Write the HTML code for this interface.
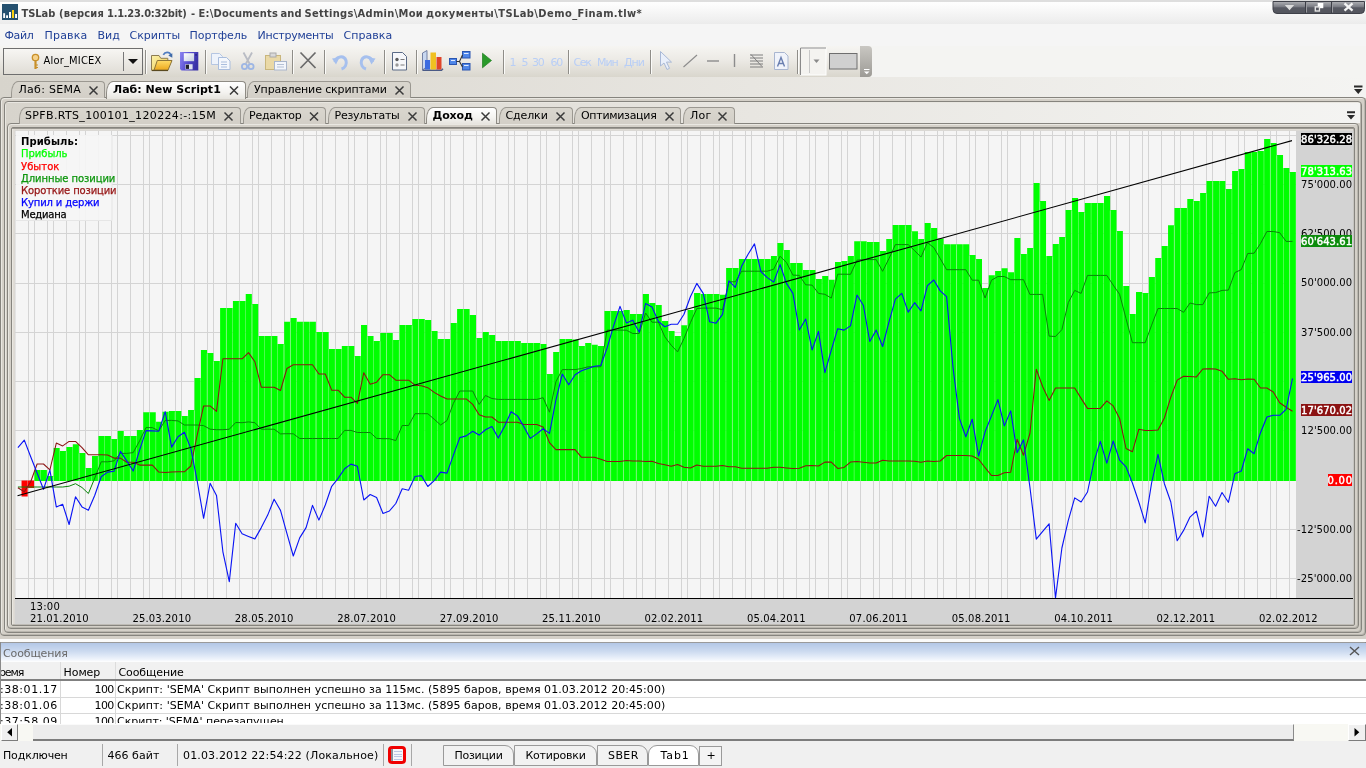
<!DOCTYPE html>
<html lang="ru"><head><meta charset="utf-8"><title>TSLab</title>
<style>
html,body{margin:0;padding:0;}
body{width:1366px;height:768px;overflow:hidden;position:relative;background:#d4d0c8;font-family:"DejaVu Sans","Liberation Sans",sans-serif;font-size:11px;}
.t{position:absolute;white-space:pre;}
.b{position:absolute;box-sizing:border-box;}
svg{position:absolute;left:0;top:0;}
svg text{font-family:"DejaVu Sans","Liberation Sans",sans-serif;}
</style></head><body>
<div id="app" style="position:absolute;left:0;top:0;width:1366px;height:768px;will-change:transform;">
<div class="b" style="left:0px;top:0px;width:1366px;height:24px;background:linear-gradient(#ffffff 0px,#fdfdfd 4px,#efefef 20px,#ebebeb 24px);"></div>
<div class="b" style="left:0px;top:0px;width:1366px;height:1.5px;background:#dedede;"></div>
<svg width="1366" height="768" viewBox="0 0 1366 768" style="z-index:5"><rect x="2" y="4" width="16" height="16" fill="#24506f"/><rect x="3.200" y="13.200" width="1.900" height="4.800" fill="#fff"/><rect x="6.100" y="15.300" width="1.900" height="2.700" fill="#fff"/><rect x="9" y="12" width="2" height="6" fill="#fff"/><rect x="12" y="10" width="2" height="8" fill="#f7cf10"/><rect x="15.100" y="14" width="1.900" height="4" fill="#fff"/><defs><linearGradient id="gwb" x1="0" y1="0" x2="0" y2="1"><stop offset="0" stop-color="#b0b1b5"/><stop offset="0.450" stop-color="#787a82"/><stop offset="0.520" stop-color="#575962"/><stop offset="1" stop-color="#53555d"/></linearGradient></defs><path d="M1273 1.500V9.500a4 4 0 0 0 4 4H1360.500a4 4 0 0 0 4-4V1.500Z" fill="url(#gwb)" stroke="#3e4048" stroke-width="1"/><path d="M1305.500 2V13M1331.500 2V13" stroke="#3c3e46" stroke-width="1"/><path d="M1306.500 2V12.500M1332.500 2V12.500" stroke="#9a9ba0" stroke-width="1"/><path d="M1284.800 5h9.400l-4.700 5.200z" fill="#dcdcdc"/><path d="M1317.700 3h5.600v5.200h-5.600z" fill="#fff"/><path d="M1314.600 6.200h5.500v5.500h-5.500z" fill="#e4e4e4"/><path d="M1316 7.600h2.800v2.700h-2.800z" fill="#575962"/><path d="M1344.500 3.300l8 7.400M1352.500 3.300l-8 7.400" stroke="#f4f4f4" stroke-width="2.300"/></svg>
<div class="t" style="left:21.50px;top:7px;font-size:11px;line-height:14px;color:#444444;font-family:'DejaVu Sans Condensed','DejaVu Sans',sans-serif;font-weight:bold;letter-spacing:-0.037px;">TSLab</div>
<div class="t" style="left:59.00px;top:7px;font-size:11px;line-height:14px;color:#444444;font-family:'DejaVu Sans Condensed','DejaVu Sans',sans-serif;font-weight:bold;letter-spacing:0.177px;">(версия</div>
<div class="t" style="left:107.00px;top:7px;font-size:11px;line-height:14px;color:#444444;font-family:'DejaVu Sans Condensed','DejaVu Sans',sans-serif;font-weight:bold;letter-spacing:-0.241px;">1.1.23.0:32bit)</div>
<div class="t" style="left:191.00px;top:7px;font-size:11px;line-height:14px;color:#444444;font-family:'DejaVu Sans Condensed','DejaVu Sans',sans-serif;font-weight:bold;">-</div>
<div class="t" style="left:198.50px;top:7px;font-size:11px;line-height:14px;color:#444444;font-family:'DejaVu Sans Condensed','DejaVu Sans',sans-serif;font-weight:bold;letter-spacing:0.212px;">E:\Documents</div>
<div class="t" style="left:280.50px;top:7px;font-size:11px;line-height:14px;color:#444444;font-family:'DejaVu Sans Condensed','DejaVu Sans',sans-serif;font-weight:bold;letter-spacing:0.096px;">and</div>
<div class="t" style="left:304.50px;top:7px;font-size:11px;line-height:14px;color:#444444;font-family:'DejaVu Sans Condensed','DejaVu Sans',sans-serif;font-weight:bold;letter-spacing:0.310px;">Settings\Admin\Мои</div>
<div class="t" style="left:426.00px;top:7px;font-size:11px;line-height:14px;color:#444444;font-family:'DejaVu Sans Condensed','DejaVu Sans',sans-serif;font-weight:bold;letter-spacing:0.432px;">документы\TSLab\Demo_Finam.tlw*</div>
<div class="b" style="left:0px;top:24px;width:1366px;height:22px;background:#f5f5f5;"></div>
<div class="t" style="left:4.50px;top:29px;font-size:11px;line-height:14px;color:#1f3f96;letter-spacing:-0.363px;">Файл</div>
<div class="t" style="left:44.50px;top:29px;font-size:11px;line-height:14px;color:#1f3f96;letter-spacing:0.187px;">Правка</div>
<div class="t" style="left:97.50px;top:29px;font-size:11px;line-height:14px;color:#1f3f96;letter-spacing:-0.000px;">Вид</div>
<div class="t" style="left:129.50px;top:29px;font-size:11px;line-height:14px;color:#1f3f96;letter-spacing:0.010px;">Скрипты</div>
<div class="t" style="left:189.50px;top:29px;font-size:11px;line-height:14px;color:#1f3f96;letter-spacing:-0.040px;">Портфель</div>
<div class="t" style="left:257.50px;top:29px;font-size:11px;line-height:14px;color:#1f3f96;letter-spacing:-0.242px;">Инструменты</div>
<div class="t" style="left:343.50px;top:29px;font-size:11px;line-height:14px;color:#1f3f96;letter-spacing:0.056px;">Справка</div>
<div class="b" style="left:0px;top:46px;width:1366px;height:32px;background:#f4f4f2;"></div>
<div class="b" style="left:0px;top:46px;width:872px;height:30.5px;background:linear-gradient(#f6f5f2 0%,#eceae5 45%,#d9d6cd 100%);border-radius:0 4px 4px 0;"></div>
<div class="b" style="left:860px;top:46px;width:12px;height:30.5px;background:linear-gradient(#c9c7c2,#9d9b96);border-radius:0 4px 4px 0;"></div>
<div class="b" style="left:3px;top:47.5px;width:140px;height:27.5px;border:1px solid #6e6e6e;background:linear-gradient(#f7f6f3,#e0ddd6);"></div>
<div class="b" style="left:123px;top:52px;width:1px;height:19px;background:#777;"></div>
<div class="t" style="left:43.50px;top:54px;font-size:11px;line-height:14px;color:#000;font-family:'DejaVu Sans Condensed','DejaVu Sans',sans-serif;letter-spacing:0.202px;">Alor_MICEX</div>
<div class="b" style="left:0px;top:77px;width:1366px;height:21px;background:linear-gradient(90deg,#d7d4cc 0%,#dedbd4 25%,#e8e6e1 55%,#f4f4f2 100%);"></div>
<svg width="1366" height="768" viewBox="0 0 1366 768"><path d="M128 59h10l-5 5z" fill="#111"/><circle cx="35.5" cy="57.5" r="3.2" fill="#f6d28a" stroke="#c8902a" stroke-width="1.3"/><path d="M35.5 60.5V69" stroke="#c8902a" stroke-width="2.2"/><path d="M36 65h2M36 67.5h2" stroke="#c8902a" stroke-width="1"/><defs><linearGradient id="gfb" x1="0" y1="0" x2="1" y2="1"><stop offset="0" stop-color="#fbf0a8"/><stop offset="1" stop-color="#efcf58"/></linearGradient><linearGradient id="gff" x1="0" y1="0" x2="0" y2="1"><stop offset="0" stop-color="#ffdc68"/><stop offset="1" stop-color="#eda81c"/></linearGradient><linearGradient id="gsv" x1="0" y1="0" x2="1" y2="0.300"><stop offset="0" stop-color="#8d86f2"/><stop offset="0.500" stop-color="#5a50d2"/><stop offset="1" stop-color="#3a32a6"/></linearGradient><linearGradient id="gsl" x1="0" y1="0" x2="1" y2="1"><stop offset="0" stop-color="#ffffff"/><stop offset="1" stop-color="#c4cde0"/></linearGradient></defs><path d="M151.500 55.500h7.500l1.800 2.800h7v12h-16.300z" fill="url(#gfb)" stroke="#8c7c52" stroke-width="1"/><path d="M154 70.200l3.300-9.700h14.700l-4 9.700z" fill="url(#gff)" stroke="#8c7438" stroke-width="1"/><path d="M152 70.500h16" stroke="#5a4a20" stroke-width="1.200"/><path d="M163.300 54.800c1.800-3.400 6.200-3.300 7.800 0.300" fill="none" stroke="#4f7cc0" stroke-width="1.700"/><path d="M168.300 55.600l4-2.400v4.600z" fill="#3f6aa8"/><path d="M180 52h18.300v18.600h-16.800l-1.500-1.500z" fill="url(#gsv)"/><rect x="183.800" y="53.200" width="10.300" height="8" fill="url(#gsl)"/><rect x="195.300" y="54" width="1.500" height="1.800" fill="#2a2480"/><rect x="185.300" y="64.200" width="7.300" height="5.200" fill="#dfe3ee"/><rect x="185.800" y="64.700" width="3.200" height="4.200" fill="#20202c"/><path d="M211.500 53.500h8l3 3v8h-11z" fill="#eef3fb" stroke="#b5c6e2"/><path d="M218.500 57.500h8l3.500 3.500v8.500h-11.500z" fill="#f4f7fc" stroke="#a9bddd"/><path d="M221 62h6M221 64.500h6M221 67h6" stroke="#a9bddd" stroke-width="1"/><path d="M243.500 52.500l6 11M252 52.500l-6 11" stroke="#b9bcc4" stroke-width="1.800" fill="none"/><circle cx="244.500" cy="66.500" r="2.600" fill="none" stroke="#9db6e4" stroke-width="1.800"/><circle cx="251" cy="66.500" r="2.600" fill="none" stroke="#9db6e4" stroke-width="1.800"/><rect x="265.500" y="55.500" width="15" height="14" fill="#ead9a6" stroke="#c9b67c"/><rect x="270" y="53" width="6" height="4" fill="#d9d9d9" stroke="#aaa"/><rect x="274.500" y="61.500" width="12" height="8.500" fill="#f3f6fb" stroke="#a9b6cc"/><path d="M277 64.500h7M277 67h7" stroke="#b4c0d4" stroke-width="1"/><path d="M300.500 52.500l15 15.500M315.500 52.500l-15 15.500" stroke="#6a6a6a" stroke-width="1.700" fill="none"/><path d="M335 62c1-6 9-7 11-1.500c1.200 4-1 7.500-4.500 8.500" fill="none" stroke="#a6c0ee" stroke-width="3"/><path d="M332 58.500l7.500-1l-3.500 7z" fill="#a6c0ee"/><path d="M372.500 62c-1-6-9-7-11-1.500c-1.200 4 1 7.500 4.500 8.500" fill="none" stroke="#a6c0ee" stroke-width="3"/><path d="M375.500 58.500l-7.500-1l3.500 7z" fill="#a6c0ee"/><path d="M392.500 52.500h10l4 4v13.500h-14z" fill="#f6f7fa" stroke="#5a6a86"/><circle cx="397" cy="59.500" r="1.700" fill="#5a5a5a"/><circle cx="397" cy="65" r="1.700" fill="#9a9a9a"/><path d="M400.500 59.500h4M400.500 65h4" stroke="#7a7a7a" stroke-width="1.200"/><path d="M422.500 53l4.500-2.500v16l-4.500 3.500z" fill="#c9d8f0" stroke="#5a6a92" stroke-width="0.800"/><path d="M422.500 70.200h19l1.500-1.500" fill="none" stroke="#4a5a86" stroke-width="1.400"/><rect x="425" y="60" width="5" height="9.500" fill="#3b6be0"/><rect x="430.500" y="52.500" width="5.500" height="17" fill="#f0c020"/><rect x="436.500" y="57" width="5" height="12.500" fill="#e04428"/><rect x="449.500" y="58.500" width="7" height="6" fill="#4f86e8" stroke="#2a55b0"/><rect x="462.500" y="51.500" width="7.500" height="6.500" fill="#4f86e8" stroke="#2a55b0"/><rect x="462.500" y="63.500" width="7.500" height="6.500" fill="#4f86e8" stroke="#2a55b0"/><path d="M456.500 61.500h3l3-6.500M459.500 61.500l3 5.500" stroke="#333" stroke-width="1.100" fill="none"/><path d="M451 60.500h4M464 53.500h4.500M464 65.500h4.500" stroke="#dfeaff" stroke-width="1.200"/><path d="M482.500 53.200l9 7.300l-9 7.300z" fill="#2a9a2a" stroke="#1c7c1c" stroke-width="0.700"/><path d="M660.500 51.500v14.500l3.500-3l3 6.500l2.500-1.200l-3-6.200h5z" fill="#e9effa" stroke="#a9b9d6" stroke-width="1"/><path d="M683.500 67l13.500-12" stroke="#8c8c8c" stroke-width="1.200"/><path d="M707 61h12" stroke="#8c8c8c" stroke-width="1.400"/><path d="M734.500 54v13" stroke="#8c8c8c" stroke-width="1.400"/><path d="M750 55h13M750 58h13M750 61h13M750 64h13M750 67h13" stroke="#7e7e7e" stroke-width="1.100"/><path d="M751 54.500l11 12" stroke="#7e7e7e" stroke-width="1"/><path d="M774.500 52.500h10l3.500 3.500v13.500h-13.500z" fill="#f0f3fa" stroke="#a9b6d0"/><path d="M777.500 66.500l3.500-9l3.500 9M778.800 63.500h4.500" stroke="#6a7fb0" stroke-width="1.400" fill="none"/><rect x="800.500" y="48" width="25.500" height="27" fill="#f4f3f0" stroke="#fff" stroke-width="1"/><path d="M800.500 75V48h25.500" fill="none" stroke="#8a8a8a" stroke-width="1"/><rect x="809" y="50" width="1" height="23" fill="#c8c8c8"/><path d="M813.500 59.500h6l-3 3.500z" fill="#8a8a8a"/><rect x="829.500" y="53.500" width="27.500" height="15.500" fill="#d0d0d0" stroke="#6e6e6e"/><path d="M864 71.500h5.500l-2.750 2.800z" fill="#fff"/><path d="M864 69.500h5.500" stroke="#fff" stroke-width="1"/></svg>
<div class="t" style="left:509.50px;top:56px;font-size:11px;line-height:14px;color:#b8cef6;">1</div>
<div class="t" style="left:521.50px;top:56px;font-size:11px;line-height:14px;color:#b8cef6;">5</div>
<div class="t" style="left:532.00px;top:56px;font-size:11px;line-height:14px;color:#b8cef6;letter-spacing:-1.198px;">30</div>
<div class="t" style="left:550.50px;top:56px;font-size:11px;line-height:14px;color:#b8cef6;letter-spacing:-1.198px;">60</div>
<div class="t" style="left:573.50px;top:56px;font-size:11px;line-height:14px;color:#b8cef6;letter-spacing:-1.396px;">Сек</div>
<div class="t" style="left:597.00px;top:56px;font-size:11px;line-height:14px;color:#b8cef6;letter-spacing:-1.016px;">Мин</div>
<div class="t" style="left:624.00px;top:56px;font-size:11px;line-height:14px;color:#b8cef6;letter-spacing:-1.067px;">Дни</div>
<div class="b" style="left:145px;top:50px;width:1px;height:24px;background:#8f8d88;"></div>
<div class="b" style="left:146px;top:50px;width:1px;height:24px;background:#fbfbf9;"></div>
<div class="b" style="left:205px;top:50px;width:1px;height:24px;background:#8f8d88;"></div>
<div class="b" style="left:206px;top:50px;width:1px;height:24px;background:#fbfbf9;"></div>
<div class="b" style="left:292px;top:50px;width:1px;height:24px;background:#8f8d88;"></div>
<div class="b" style="left:293px;top:50px;width:1px;height:24px;background:#fbfbf9;"></div>
<div class="b" style="left:324px;top:50px;width:1px;height:24px;background:#8f8d88;"></div>
<div class="b" style="left:325px;top:50px;width:1px;height:24px;background:#fbfbf9;"></div>
<div class="b" style="left:384px;top:50px;width:1px;height:24px;background:#8f8d88;"></div>
<div class="b" style="left:385px;top:50px;width:1px;height:24px;background:#fbfbf9;"></div>
<div class="b" style="left:416px;top:50px;width:1px;height:24px;background:#8f8d88;"></div>
<div class="b" style="left:417px;top:50px;width:1px;height:24px;background:#fbfbf9;"></div>
<div class="b" style="left:503px;top:50px;width:1px;height:24px;background:#8f8d88;"></div>
<div class="b" style="left:504px;top:50px;width:1px;height:24px;background:#fbfbf9;"></div>
<div class="b" style="left:568px;top:50px;width:1px;height:24px;background:#8f8d88;"></div>
<div class="b" style="left:569px;top:50px;width:1px;height:24px;background:#fbfbf9;"></div>
<div class="b" style="left:650px;top:50px;width:1px;height:24px;background:#8f8d88;"></div>
<div class="b" style="left:651px;top:50px;width:1px;height:24px;background:#fbfbf9;"></div>
<div class="b" style="left:797px;top:50px;width:1px;height:24px;background:#8f8d88;"></div>
<div class="b" style="left:798px;top:50px;width:1px;height:24px;background:#fbfbf9;"></div>
<div class="b" style="left:0px;top:97px;width:1366px;height:539px;border:1px solid #86847e;border-radius:4px;background:#d4d0c8;box-shadow:inset 1px 1px 0 #e9e7e1, inset -1px -1px 0 #b9b6ae;"></div>
<div class="b" style="left:4px;top:101px;width:1358px;height:531.5px;border:1px solid #86847e;border-radius:4px;background:#d4d0c8;box-shadow:inset 1px 1px 0 #e9e7e1, inset -1px -1px 0 #b9b6ae;"></div>
<div class="b" style="left:6px;top:103px;width:1354px;height:20px;background:linear-gradient(90deg,#d7d4cc 0%,#dedbd4 25%,#e8e6e1 55%,#f4f4f2 100%);"></div>
<div class="b" style="left:7px;top:123px;width:1351.5px;height:506px;border:1px solid #86847e;border-radius:4px;background:#d4d0c8;box-shadow:inset 1px 1px 0 #e9e7e1, inset -1px -1px 0 #b9b6ae;"></div>
<div class="b" style="left:11px;top:127px;width:1344px;height:498.5px;border:1px solid #86847e;border-radius:2px;background:#e0dcd5;box-shadow:inset 1px 1px 0 #e9e7e1, inset -1px -1px 0 #b9b6ae;"></div>
<div class="b" style="left:12px;top:127.5px;width:1342px;height:1px;background:#9c9992;"></div>
<div class="b" style="left:11px;top:81px;width:93.5px;height:17px;background:linear-gradient(#d9d6ce,#d3cfc7);border:1px solid #9b9891;border-bottom:none;border-radius:7px 4px 0 0 / 12px 4px 0 0;"></div>
<div class="t" style="left:18.50px;top:83px;font-size:11px;line-height:14px;color:#000;letter-spacing:0.294px;">Лаб: SEMA</div>
<svg width="1366" height="768" viewBox="0 0 1366 768"><path d="M89.5 86.5l8 8M97.5 86.5l-8 8" stroke="#3a3a3a" stroke-width="1.5" fill="none"/></svg>
<div class="b" style="left:106px;top:80.5px;width:139.5px;height:18px;background:linear-gradient(#ffffff,#f4f3f0 60%,#e6e4de);border:1px solid #8e8b84;border-bottom:none;border-radius:7px 4px 0 0 / 12px 4px 0 0;"></div>
<div class="t" style="left:113.00px;top:83px;font-size:11px;line-height:14px;color:#000;font-weight:bold;letter-spacing:0.016px;">Лаб: New Script1</div>
<svg width="1366" height="768" viewBox="0 0 1366 768"><path d="M230 86.5l8 8M238 86.5l-8 8" stroke="#3a3a3a" stroke-width="1.5" fill="none"/></svg>
<div class="b" style="left:247px;top:81px;width:164px;height:17px;background:linear-gradient(#d9d6ce,#d3cfc7);border:1px solid #9b9891;border-bottom:none;border-radius:7px 4px 0 0 / 12px 4px 0 0;"></div>
<div class="t" style="left:254.00px;top:83px;font-size:11px;line-height:14px;color:#000;letter-spacing:-0.122px;">Управление скриптами</div>
<svg width="1366" height="768" viewBox="0 0 1366 768"><path d="M395.5 86.5l8 8M403.5 86.5l-8 8" stroke="#3a3a3a" stroke-width="1.5" fill="none"/></svg>
<div class="b" style="left:19px;top:107px;width:222px;height:17px;background:linear-gradient(#d9d6ce,#d3cfc7);border:1px solid #9b9891;border-bottom:none;border-radius:7px 4px 0 0 / 12px 4px 0 0;"></div>
<div class="t" style="left:25.00px;top:109px;font-size:11px;line-height:14px;color:#000;letter-spacing:0.349px;">SPFB.RTS_100101_120224:-:15M</div>
<svg width="1366" height="768" viewBox="0 0 1366 768"><path d="M224.5 112.5l8 8M232.5 112.5l-8 8" stroke="#3a3a3a" stroke-width="1.5" fill="none"/></svg>
<div class="b" style="left:243px;top:107px;width:83px;height:17px;background:linear-gradient(#d9d6ce,#d3cfc7);border:1px solid #9b9891;border-bottom:none;border-radius:7px 4px 0 0 / 12px 4px 0 0;"></div>
<div class="t" style="left:249.00px;top:109px;font-size:11px;line-height:14px;color:#000;letter-spacing:-0.244px;">Редактор</div>
<svg width="1366" height="768" viewBox="0 0 1366 768"><path d="M310 112.5l8 8M318 112.5l-8 8" stroke="#3a3a3a" stroke-width="1.5" fill="none"/></svg>
<div class="b" style="left:328px;top:107px;width:96.5px;height:17px;background:linear-gradient(#d9d6ce,#d3cfc7);border:1px solid #9b9891;border-bottom:none;border-radius:7px 4px 0 0 / 12px 4px 0 0;"></div>
<div class="t" style="left:334.50px;top:109px;font-size:11px;line-height:14px;color:#000;letter-spacing:-0.246px;">Результаты</div>
<svg width="1366" height="768" viewBox="0 0 1366 768"><path d="M408.5 112.5l8 8M416.5 112.5l-8 8" stroke="#3a3a3a" stroke-width="1.5" fill="none"/></svg>
<div class="b" style="left:426px;top:107px;width:71px;height:17px;background:linear-gradient(#ffffff,#f4f3f0 60%,#e6e4de);border:1px solid #8e8b84;border-bottom:none;border-radius:7px 4px 0 0 / 12px 4px 0 0;"></div>
<div class="t" style="left:432.50px;top:109px;font-size:11px;line-height:14px;color:#000;font-weight:bold;letter-spacing:-0.148px;">Доход</div>
<svg width="1366" height="768" viewBox="0 0 1366 768"><path d="M481.5 112.5l8 8M489.5 112.5l-8 8" stroke="#3a3a3a" stroke-width="1.5" fill="none"/></svg>
<div class="b" style="left:498.5px;top:107px;width:74px;height:17px;background:linear-gradient(#d9d6ce,#d3cfc7);border:1px solid #9b9891;border-bottom:none;border-radius:7px 4px 0 0 / 12px 4px 0 0;"></div>
<div class="t" style="left:505.50px;top:109px;font-size:11px;line-height:14px;color:#000;letter-spacing:-0.116px;">Сделки</div>
<svg width="1366" height="768" viewBox="0 0 1366 768"><path d="M556.5 112.5l8 8M564.5 112.5l-8 8" stroke="#3a3a3a" stroke-width="1.5" fill="none"/></svg>
<div class="b" style="left:574px;top:107px;width:107px;height:17px;background:linear-gradient(#d9d6ce,#d3cfc7);border:1px solid #9b9891;border-bottom:none;border-radius:7px 4px 0 0 / 12px 4px 0 0;"></div>
<div class="t" style="left:581.00px;top:109px;font-size:11px;line-height:14px;color:#000;letter-spacing:-0.290px;">Оптимизация</div>
<svg width="1366" height="768" viewBox="0 0 1366 768"><path d="M665.5 112.5l8 8M673.5 112.5l-8 8" stroke="#3a3a3a" stroke-width="1.5" fill="none"/></svg>
<div class="b" style="left:682.5px;top:107px;width:52.5px;height:17px;background:linear-gradient(#d9d6ce,#d3cfc7);border:1px solid #9b9891;border-bottom:none;border-radius:7px 4px 0 0 / 12px 4px 0 0;"></div>
<div class="t" style="left:690.00px;top:109px;font-size:11px;line-height:14px;color:#000;letter-spacing:0.260px;">Лог</div>
<svg width="1366" height="768" viewBox="0 0 1366 768"><path d="M718.5 112.5l8 8M726.5 112.5l-8 8" stroke="#3a3a3a" stroke-width="1.5" fill="none"/></svg>
<svg width="1366" height="768" viewBox="0 0 1366 768"><path d="M1354 85.5h8.5v2h-8.5zM1354 89h8.5l-4.25 5z" fill="#2a2a2a"/><path d="M1347 111.3h8v2h-8zM1347 115h8l-4 4.6z" fill="#2a2a2a"/></svg>
<div class="b" style="left:0px;top:638.5px;width:1366px;height:3px;background:#fbfbfa;"></div>
<div class="b" style="left:0px;top:641.5px;width:1366px;height:1px;background:#9a9a9a;"></div>
<div class="b" style="left:1364.5px;top:642px;width:1.5px;height:99px;background:#8a8a8a;"></div>
<div class="b" style="left:0px;top:642.5px;width:1366px;height:19px;background:linear-gradient(#b3c7e6 0%,#cddbf0 45%,#eef3fb 85%,#ffffff 100%);"></div>
<div class="t" style="left:3.10px;top:647px;font-size:11px;line-height:14px;color:#6a6a6a;letter-spacing:-0.151px;">Сообщения</div>
<svg width="1366" height="768" viewBox="0 0 1366 768"><path d="M1350 647l9 8M1359 647l-9 8" stroke="#555" stroke-width="1.4" fill="none"/></svg>
<div class="b" style="left:0px;top:661.5px;width:1366px;height:18.5px;background:#f1f1f1;"></div>
<div class="b" style="left:60px;top:662px;width:1px;height:18px;background:#dcdcdc;"></div>
<div class="b" style="left:115px;top:662px;width:1px;height:18px;background:#dcdcdc;"></div>
<div class="t" style="left:-1.00px;top:666px;font-size:11px;line-height:14px;color:#000;letter-spacing:-1.122px;">ремя</div>
<div class="t" style="left:63.50px;top:666px;font-size:11px;line-height:14px;color:#000;letter-spacing:-0.062px;">Номер</div>
<div class="t" style="left:118.50px;top:666px;font-size:11px;line-height:14px;color:#000;letter-spacing:-0.108px;">Сообщение</div>
<div class="b" style="left:0px;top:679px;width:1366px;height:2px;background:#808080;"></div>
<div class="b" style="left:0px;top:681px;width:1366px;height:43px;background:#ffffff;"></div>
<div class="b" style="left:0px;top:696.5px;width:1366px;height:1px;background:#d8d8d8;"></div>
<div class="b" style="left:0px;top:712.5px;width:1366px;height:1px;background:#d8d8d8;"></div>
<div class="b" style="left:60px;top:681px;width:1px;height:43px;background:#d8d8d8;"></div>
<div class="b" style="left:115px;top:681px;width:1px;height:43px;background:#d8d8d8;"></div>
<div class="b" style="left:0;top:681px;width:1366px;height:41.500px;overflow:hidden">
<div class="t" style="left:0.00px;top:2px;font-size:11px;line-height:14px;color:#000;letter-spacing:0.550px;">:38:01.17</div>
<div class="t" style="left:94.50px;top:2px;font-size:11px;line-height:14px;color:#000;letter-spacing:-0.598px;">100</div>
<div class="t" style="left:117.00px;top:2px;font-size:11px;line-height:14px;color:#000;letter-spacing:0.051px;">Скрипт: &#x27;SEMA&#x27; Скрипт выполнен успешно за 115мс. (5895 баров, время 01.03.2012 20:45:00)</div>
<div class="t" style="left:0.00px;top:18px;font-size:11px;line-height:14px;color:#000;letter-spacing:0.550px;">:38:01.06</div>
<div class="t" style="left:94.50px;top:18px;font-size:11px;line-height:14px;color:#000;letter-spacing:-0.598px;">100</div>
<div class="t" style="left:117.00px;top:18px;font-size:11px;line-height:14px;color:#000;letter-spacing:0.051px;">Скрипт: &#x27;SEMA&#x27; Скрипт выполнен успешно за 113мс. (5895 баров, время 01.03.2012 20:45:00)</div>
<div class="t" style="left:0.00px;top:34px;font-size:11px;line-height:14px;color:#000;letter-spacing:0.550px;">:37:58.09</div>
<div class="t" style="left:94.50px;top:34px;font-size:11px;line-height:14px;color:#000;letter-spacing:-0.598px;">100</div>
<div class="t" style="left:117.00px;top:34px;font-size:11px;line-height:14px;color:#000;letter-spacing:-0.051px;">Скрипт: &#x27;SEMA&#x27; перезапущен</div>
</div>
<div class="b" style="left:0px;top:642px;width:1px;height:98px;background:#8a8a8a;"></div>
<div class="b" style="left:0px;top:724px;width:1366px;height:17px;background:#f8f8f3;"></div>
<div class="b" style="left:33px;top:724px;width:1261px;height:17px;background:#ececec;border-top:1px solid #fafafa;border-bottom:2px solid #7c7c7c;border-right:1px solid #8a8a8a;"></div>
<div class="b" style="left:0.5px;top:724px;width:17.5px;height:17px;background:#f0f0f0;border-right:1.5px solid #7c7c7c;border-bottom:1.5px solid #7c7c7c;border-top:1px solid #fff;border-left:1px solid #fff;"></div>
<div class="b" style="left:1348px;top:724px;width:18px;height:17px;background:#f0f0f0;border-right:1.5px solid #7c7c7c;border-bottom:1.5px solid #7c7c7c;border-top:1px solid #fff;border-left:1px solid #fff;"></div>
<svg width="1366" height="768" viewBox="0 0 1366 768"><path d="M12 728v8.500l-4.800-4.250z" fill="#000"/><path d="M1354.500 728v8.500l4.800-4.250z" fill="#000"/></svg>
<div class="b" style="left:0px;top:741px;width:1366px;height:27px;background:#f0f0f0;"></div>
<div class="b" style="left:102px;top:744px;width:1px;height:22px;background:#a8a8a8;"></div>
<div class="b" style="left:177px;top:744px;width:1px;height:22px;background:#a8a8a8;"></div>
<div class="b" style="left:383px;top:744px;width:1px;height:22px;background:#a8a8a8;"></div>
<div class="b" style="left:411px;top:744px;width:1px;height:22px;background:#a8a8a8;"></div>
<div class="t" style="left:3.00px;top:749px;font-size:11px;line-height:14px;color:#000;letter-spacing:-0.150px;">Подключен</div>
<div class="t" style="left:107.50px;top:749px;font-size:11px;line-height:14px;color:#000;letter-spacing:0.032px;">466 байт</div>
<div class="t" style="left:183.00px;top:749px;font-size:11px;line-height:14px;color:#000;letter-spacing:0.158px;">01.03.2012 22:54:22 (Локальное)</div>
<div class="b" style="left:388px;top:746px;width:18px;height:18px;border:3px solid #f00000;border-radius:4px;background:#f4f6fb;"></div>
<div class="b" style="left:391px;top:749px;width:2px;height:12px;background:#8a8f98;"></div>
<div class="b" style="left:394px;top:751px;width:8px;height:1px;background:#b9c7e6;"></div>
<div class="b" style="left:394px;top:753.5px;width:8px;height:1px;background:#b9c7e6;"></div>
<div class="b" style="left:394px;top:756px;width:8px;height:1px;background:#b9c7e6;"></div>
<div class="b" style="left:394px;top:758.5px;width:8px;height:1px;background:#b9c7e6;"></div>
<div class="b" style="left:443px;top:745px;width:70.5px;height:20.5px;border:1px solid #9a9a9a;background:#f2f2f2;border-radius:0 9px 0 0;"></div>
<div class="t" style="left:454.50px;top:749px;font-size:11px;line-height:14px;color:#000;letter-spacing:-0.248px;">Позиции</div>
<div class="b" style="left:513.5px;top:745px;width:83px;height:20.5px;border:1px solid #9a9a9a;background:#f2f2f2;border-radius:0 9px 0 0;"></div>
<div class="t" style="left:525.50px;top:749px;font-size:11px;line-height:14px;color:#000;letter-spacing:-0.223px;">Котировки</div>
<div class="b" style="left:596.5px;top:745px;width:51.5px;height:20.5px;border:1px solid #9a9a9a;background:#f2f2f2;border-radius:0 9px 0 0;"></div>
<div class="t" style="left:608.00px;top:749px;font-size:11px;line-height:14px;color:#000;letter-spacing:0.393px;">SBER</div>
<div class="b" style="left:648px;top:745px;width:51px;height:20.5px;border:1px solid #9a9a9a;background:#ffffff;border-radius:9px 9px 0 0;"></div>
<div class="t" style="left:660.50px;top:749px;font-size:11px;line-height:14px;color:#000;letter-spacing:0.893px;">Tab1</div>
<div class="b" style="left:699px;top:746px;width:23px;height:19.5px;border:1px solid #9a9a9a;background:#f4f4f4;"></div>
<div class="t" style="left:706.50px;top:749px;font-size:11px;line-height:14px;color:#000;">+</div>
<svg width="1366" height="768" viewBox="0 0 1366 768">
<rect x="14.7" y="130.5" width="1338.8" height="493.7" fill="#d3d3d3"/>
<rect x="15.5" y="131" width="1280.5" height="467" fill="#f5f5f5"/>
<line x1="15" x2="1296" y1="135.5" y2="135.5" stroke="#d4d4d4" stroke-width="1"/>
<line x1="15" x2="1296" y1="184.5" y2="184.5" stroke="#d4d4d4" stroke-width="1"/>
<line x1="15" x2="1296" y1="233.5" y2="233.5" stroke="#d4d4d4" stroke-width="1"/>
<line x1="15" x2="1296" y1="283.5" y2="283.5" stroke="#d4d4d4" stroke-width="1"/>
<line x1="15" x2="1296" y1="332.5" y2="332.5" stroke="#d4d4d4" stroke-width="1"/>
<line x1="15" x2="1296" y1="381.5" y2="381.5" stroke="#d4d4d4" stroke-width="1"/>
<line x1="15" x2="1296" y1="430.5" y2="430.5" stroke="#d4d4d4" stroke-width="1"/>
<line x1="15" x2="1296" y1="480.5" y2="480.5" stroke="#d4d4d4" stroke-width="1"/>
<line x1="15" x2="1296" y1="529.5" y2="529.5" stroke="#d4d4d4" stroke-width="1"/>
<line x1="15" x2="1296" y1="578.5" y2="578.5" stroke="#d4d4d4" stroke-width="1"/>
<path d="M28.5 131V598M34.5 131V598M47.5 131V598M53.5 131V598M66.5 131V598M79.5 131V598M85.5 131V598M98.5 131V598M111.5 131V598M117.5 131V598M130.5 131V598M143.5 131V598M149.5 131V598M162.5 131V598M175.5 131V598M181.5 131V598M194.5 131V598M207.5 131V598M213.5 131V598M226.5 131V598M239.5 131V598M252.5 131V598M258.5 131V598M271.5 131V598M284.5 131V598M290.5 131V598M303.5 131V598M316.5 131V598M322.5 131V598M335.5 131V598M348.5 131V598M354.5 131V598M367.5 131V598M380.5 131V598M386.5 131V598M399.5 131V598M412.5 131V598M418.5 131V598M431.5 131V598M444.5 131V598M450.5 131V598M463.5 131V598M476.5 131V598M482.5 131V598M495.5 131V598M508.5 131V598M514.5 131V598M527.5 131V598M540.5 131V598M546.5 131V598M559.5 131V598M572.5 131V598M578.5 131V598M591.5 131V598M604.5 131V598M610.5 131V598M623.5 131V598M636.5 131V598M642.5 131V598M655.5 131V598M668.5 131V598M681.5 131V598M687.5 131V598M700.5 131V598M713.5 131V598M719.5 131V598M732.5 131V598M745.5 131V598M751.5 131V598M764.5 131V598M777.5 131V598M783.5 131V598M796.5 131V598M809.5 131V598M815.5 131V598M828.5 131V598M841.5 131V598M847.5 131V598M860.5 131V598M873.5 131V598M879.5 131V598M892.5 131V598M905.5 131V598M911.5 131V598M924.5 131V598M937.5 131V598M943.5 131V598M956.5 131V598M969.5 131V598M975.5 131V598M988.5 131V598M1001.5 131V598M1007.5 131V598M1020.5 131V598M1033.5 131V598M1040.5 131V598M1052.5 131V598M1065.5 131V598M1072.5 131V598M1084.5 131V598M1097.5 131V598M1110.5 131V598M1116.5 131V598M1129.5 131V598M1142.5 131V598M1148.5 131V598M1161.5 131V598M1174.5 131V598M1180.5 131V598M1193.5 131V598M1206.5 131V598M1212.5 131V598M1225.5 131V598M1238.5 131V598M1244.5 131V598M1257.5 131V598M1270.5 131V598M1276.5 131V598M1289.5 131V598" stroke="#d4d4d4" stroke-width="1" fill="none"/>
<path d="M34.37 470.1H40.47V481H34.37ZM40.77 470.1H46.88V481H40.77ZM47.17 476.0H53.28V481H47.17ZM53.58 448.1H59.69V481H53.58ZM59.98 450.9H66.09V481H59.98ZM66.39 447.1H72.50V481H66.39ZM72.80 444.2H78.90V481H72.80ZM79.20 452.9H85.30V481H79.20ZM85.61 468.0H91.71V481H85.61ZM92.01 455.9H98.11V481H92.01ZM98.42 436.1H104.52V481H98.42ZM104.82 436.1H110.92V481H104.82ZM111.23 438.9H117.33V481H111.23ZM117.63 431.1H123.73V481H117.63ZM124.04 436.1H130.14V481H124.04ZM130.44 436.1H136.55V481H130.44ZM136.84 430.1H142.95V481H136.84ZM143.25 412.2H149.35V481H143.25ZM149.66 412.2H155.76V481H149.66ZM156.06 421.7H162.16V481H156.06ZM162.47 411.7H168.57V481H162.47ZM168.87 411.0H174.97V481H168.87ZM175.28 411.0H181.38V481H175.28ZM181.68 415.9H187.78V481H181.68ZM188.09 410.0H194.19V481H188.09ZM194.49 378.0H200.59V481H194.49ZM200.90 350.1H207.00V481H200.90ZM207.30 353.0H213.41V481H207.30ZM213.71 361.0H219.81V481H213.71ZM220.11 308.0H226.22V481H220.11ZM226.52 308.0H232.62V481H226.52ZM232.92 301.0H239.03V481H232.92ZM239.33 301.0H245.43V481H239.33ZM245.73 294.0H251.84V481H245.73ZM252.14 304.0H258.24V481H252.14ZM258.54 335.9H264.64V481H258.54ZM264.94 335.9H271.05V481H264.94ZM271.35 335.9H277.45V481H271.35ZM277.75 343.9H283.86V481H277.75ZM284.16 321.7H290.26V481H284.16ZM290.56 318.1H296.67V481H290.56ZM296.97 321.7H303.07V481H296.97ZM303.38 321.7H309.48V481H303.38ZM309.78 321.7H315.88V481H309.78ZM316.19 332.1H322.29V481H316.19ZM322.59 332.1H328.69V481H322.59ZM329.00 348.9H335.10V481H329.00ZM335.40 348.9H341.50V481H335.40ZM341.81 346.1H347.91V481H341.81ZM348.21 346.1H354.31V481H348.21ZM354.62 356.0H360.72V481H354.62ZM361.02 325.1H367.12V481H361.02ZM367.43 335.9H373.53V481H367.43ZM373.83 340.9H379.94V481H373.83ZM380.24 333.1H386.34V481H380.24ZM386.64 333.1H392.75V481H386.64ZM393.05 340.1H399.15V481H393.05ZM399.45 325.1H405.56V481H399.45ZM405.86 325.1H411.96V481H405.86ZM412.26 318.9H418.37V481H412.26ZM418.67 318.9H424.77V481H418.67ZM425.07 320.1H431.18V481H425.07ZM431.47 330.9H437.58V481H431.47ZM437.88 338.9H443.99V481H437.88ZM444.28 338.9H450.39V481H444.28ZM450.69 323.1H456.80V481H450.69ZM457.09 309.0H463.20V481H457.09ZM463.50 309.0H469.61V481H463.50ZM469.90 315.1H476.01V481H469.90ZM476.31 337.9H482.42V481H476.31ZM482.71 332.1H488.82V481H482.71ZM489.12 335.1H495.23V481H489.12ZM495.52 341.1H501.63V481H495.52ZM501.93 341.1H508.04V481H501.93ZM508.33 341.1H514.44V481H508.33ZM514.74 341.1H520.85V481H514.74ZM521.14 343.1H527.25V481H521.14ZM527.55 343.1H533.65V481H527.55ZM533.96 343.1H540.06V481H533.96ZM540.36 343.9H546.47V481H540.36ZM546.76 374.0H552.87V481H546.76ZM553.17 352.1H559.27V481H553.17ZM559.58 338.9H565.68V481H559.58ZM565.98 338.9H572.09V481H565.98ZM572.38 339.5H578.49V481H572.38ZM578.79 346.1H584.89V481H578.79ZM585.20 343.1H591.30V481H585.20ZM591.60 344.8H597.71V481H591.60ZM598.00 346.1H604.11V481H598.00ZM604.41 311.1H610.51V481H604.41ZM610.82 311.1H616.92V481H610.82ZM617.22 311.1H623.33V481H617.22ZM623.62 310.1H629.73V481H623.62ZM630.03 314.0H636.13V481H630.03ZM636.43 314.0H642.54V481H636.43ZM642.84 293.9H648.95V481H642.84ZM649.25 303.0H655.35V481H649.25ZM655.65 305.1H661.75V481H655.65ZM662.05 321.0H668.16V481H662.05ZM668.46 331.0H674.57V481H668.46ZM674.87 336.0H680.97V481H674.87ZM681.27 325.2H687.38V481H681.27ZM687.67 310.1H693.78V481H687.67ZM694.08 293.1H700.19V481H694.08ZM700.49 293.9H706.59V481H700.49ZM706.89 293.9H713.00V481H706.89ZM713.29 293.9H719.40V481H713.29ZM719.70 294.8H725.81V481H719.70ZM726.11 268.1H732.21V481H726.11ZM732.51 268.1H738.62V481H732.51ZM738.91 259.0H745.02V481H738.91ZM745.32 259.0H751.43V481H745.32ZM751.73 259.0H757.83V481H751.73ZM758.13 259.0H764.24V481H758.13ZM764.53 259.0H770.64V481H764.53ZM770.94 255.9H777.05V481H770.94ZM777.35 243.0H783.45V481H777.35ZM783.75 250.0H789.86V481H783.75ZM790.15 263.1H796.26V481H790.15ZM796.56 263.1H802.67V481H796.56ZM802.97 270.1H809.07V481H802.97ZM809.37 270.1H815.48V481H809.37ZM815.77 278.9H821.88V481H815.77ZM822.18 275.9H828.29V481H822.18ZM828.59 279.7H834.69V481H828.59ZM834.99 262.1H841.10V481H834.99ZM841.39 261.1H847.50V481H841.39ZM847.80 255.9H853.90V481H847.80ZM854.21 241.3H860.31V481H854.21ZM860.61 241.3H866.72V481H860.61ZM867.01 242.1H873.12V481H867.01ZM873.42 242.1H879.52V481H873.42ZM879.83 251.0H885.93V481H879.83ZM886.23 238.9H892.34V481H886.23ZM892.63 225.1H898.74V481H892.63ZM899.04 225.1H905.14V481H899.04ZM905.45 225.1H911.55V481H905.45ZM911.85 231.3H917.96V481H911.85ZM918.25 238.9H924.36V481H918.25ZM924.66 223.1H930.76V481H924.66ZM931.07 228.1H937.17V481H931.07ZM937.47 238.4H943.58V481H937.47ZM943.88 244.3H949.98V481H943.88ZM950.28 244.3H956.38V481H950.28ZM956.69 244.3H962.79V481H956.69ZM963.09 244.3H969.20V481H963.09ZM969.50 255.1H975.60V481H969.50ZM975.90 259.0H982.00V481H975.90ZM982.31 288.0H988.41V481H982.31ZM988.71 275.2H994.82V481H988.71ZM995.12 271.0H1001.22V481H995.12ZM1001.52 268.2H1007.62V481H1001.52ZM1007.93 272.2H1014.03V481H1007.93ZM1014.33 237.9H1020.44V481H1014.33ZM1020.74 254.0H1026.84V481H1020.74ZM1027.14 248.1H1033.24V481H1027.14ZM1033.55 183.0H1039.65V481H1033.55ZM1039.95 201.1H1046.05V481H1039.95ZM1046.36 256.0H1052.46V481H1046.36ZM1052.76 244.0H1058.87V481H1052.76ZM1059.17 237.1H1065.27V481H1059.17ZM1065.57 210.1H1071.67V481H1065.57ZM1071.98 198.0H1078.08V481H1071.98ZM1078.38 212.1H1084.48V481H1078.38ZM1084.79 203.1H1090.89V481H1084.79ZM1091.19 203.1H1097.29V481H1091.19ZM1097.60 203.1H1103.70V481H1097.60ZM1104.00 196.1H1110.11V481H1104.00ZM1110.41 210.1H1116.51V481H1110.41ZM1116.81 231.0H1122.91V481H1116.81ZM1123.22 285.9H1129.32V481H1123.22ZM1129.62 314.0H1135.72V481H1129.62ZM1136.03 292.1H1142.13V481H1136.03ZM1142.43 293.1H1148.53V481H1142.43ZM1148.84 277.1H1154.94V481H1148.84ZM1155.24 258.0H1161.35V481H1155.24ZM1161.65 246.0H1167.75V481H1161.65ZM1168.05 225.2H1174.15V481H1168.05ZM1174.46 208.1H1180.56V481H1174.46ZM1180.86 208.1H1186.96V481H1180.86ZM1187.27 198.9H1193.37V481H1187.27ZM1193.67 201.0H1199.77V481H1193.67ZM1200.08 193.1H1206.18V481H1200.08ZM1206.48 181.1H1212.59V481H1206.48ZM1212.89 181.1H1218.99V481H1212.89ZM1219.29 181.1H1225.39V481H1219.29ZM1225.70 188.9H1231.80V481H1225.70ZM1232.10 170.9H1238.20V481H1232.10ZM1238.51 168.9H1244.61V481H1238.51ZM1244.91 152.0H1251.01V481H1244.91ZM1251.32 152.0H1257.42V481H1251.32ZM1257.72 151.0H1263.82V481H1257.72ZM1264.13 139.0H1270.23V481H1264.13ZM1270.53 143.0H1276.63V481H1270.53ZM1276.94 155.0H1283.04V481H1276.94ZM1283.34 168.1H1289.44V481H1283.34ZM1289.75 172.1H1295.85V481H1289.75Z" fill="#00ff00"/>
<path d="M21.55 480.600H27.66V496.5H21.55ZM27.96 480.600H34.07V488.0H27.96Z" fill="#ff0000"/>
<path d="M47.02 476.5V481M53.43 476.5V481M66.24 451.4V481M79.05 453.4V481M85.45 468.5V481M98.27 456.4V481M111.08 439.4V481M117.48 439.4V481M130.29 436.6V481M143.10 430.6V481M149.50 412.7V481M162.31 422.2V481M175.12 411.5V481M181.53 416.4V481M194.34 410.5V481M207.15 353.5V481M213.56 361.5V481M226.37 308.5V481M239.18 301.5V481M251.99 304.5V481M258.39 336.4V481M271.20 336.4V481M284.01 344.4V481M290.42 322.2V481M303.23 322.2V481M316.04 332.6V481M322.44 332.6V481M335.25 349.4V481M348.06 346.6V481M354.47 356.5V481M367.28 336.4V481M380.09 341.4V481M386.49 333.6V481M399.30 340.6V481M412.11 325.6V481M418.52 319.4V481M431.32 331.4V481M444.13 339.4V481M450.54 339.4V481M463.35 309.5V481M476.16 338.4V481M482.56 338.4V481M495.38 341.6V481M508.19 341.6V481M514.59 341.6V481M527.40 343.6V481M540.21 344.4V481M546.62 374.5V481M559.43 352.6V481M572.24 340.0V481M578.64 346.6V481M591.45 345.3V481M604.26 346.6V481M610.67 311.6V481M623.48 311.6V481M636.28 314.5V481M642.69 314.5V481M655.50 305.6V481M668.31 331.5V481M681.12 336.5V481M687.52 325.7V481M700.34 294.4V481M713.14 294.4V481M719.55 295.3V481M732.36 268.6V481M745.17 259.5V481M751.58 259.5V481M764.38 259.5V481M777.20 256.4V481M783.60 250.5V481M796.41 263.6V481M809.22 270.6V481M815.62 279.4V481M828.44 280.2V481M841.25 262.6V481M847.65 261.6V481M860.46 241.8V481M873.27 242.6V481M879.68 251.5V481M892.49 239.4V481M905.30 225.6V481M911.70 231.8V481M924.51 239.4V481M937.32 238.9V481M943.73 244.8V481M956.54 244.8V481M969.35 255.6V481M975.75 259.5V481M988.56 288.5V481M1001.37 271.5V481M1007.78 272.7V481M1020.59 254.5V481M1033.39 248.6V481M1039.80 201.6V481M1052.61 256.5V481M1065.42 237.6V481M1071.83 210.6V481M1084.63 212.6V481M1097.44 203.6V481M1110.26 210.6V481M1116.66 231.5V481M1129.47 314.5V481M1142.28 293.6V481M1148.68 293.6V481M1161.50 258.5V481M1174.31 225.7V481M1180.71 208.6V481M1193.52 201.5V481M1206.33 193.6V481M1212.74 181.6V481M1225.55 189.4V481M1238.36 171.4V481M1244.76 169.4V481M1257.57 152.5V481M1270.38 143.5V481M1276.79 155.5V481M1289.60 172.6V481" stroke="#ffffff" stroke-opacity="0.4" stroke-width="0.8" fill="none"/>
<polyline points="17.9,487.0 24.3,487.0 30.7,487.0 37.1,487.0 43.5,487.0 49.9,487.0 56.3,487.0 62.7,487.0 69.1,486.2 75.5,483.7 82.0,487.5 88.4,493.5 94.8,478.0 101.2,461.8 107.6,461.8 114.0,460.9 120.4,453.4 126.8,453.4 133.2,452.6 139.6,440.9 146.0,427.6 152.4,427.6 158.8,430.9 165.2,420.4 171.6,420.4 178.0,420.9 184.4,425.0 190.8,425.0 197.2,425.0 203.6,425.6 210.1,429.2 216.5,429.7 222.9,429.7 229.3,429.2 235.7,422.5 242.1,422.7 248.5,421.9 254.9,422.7 261.3,429.2 267.7,429.2 274.1,429.2 280.5,433.9 286.9,433.7 293.3,433.8 299.7,438.5 306.1,438.5 312.5,438.5 318.9,438.5 325.3,438.5 331.7,438.5 338.1,438.5 344.6,430.4 351.0,430.4 357.4,432.5 363.8,432.5 370.2,432.5 376.6,438.4 383.0,438.7 389.4,438.7 395.8,440.6 402.2,425.5 408.6,425.5 415.0,413.7 421.4,413.7 427.8,413.7 434.2,419.2 440.6,425.0 447.0,420.5 453.4,403.3 459.8,391.0 466.2,391.0 472.7,391.0 479.1,404.4 485.5,395.5 491.9,398.5 498.3,399.4 504.7,399.4 511.1,399.4 517.5,399.4 523.9,399.4 530.3,399.4 536.7,399.4 543.1,397.7 549.5,412.2 555.9,381.8 562.3,369.6 568.7,369.6 575.1,369.6 581.5,368.5 587.9,366.8 594.4,366.8 600.8,366.8 607.2,330.1 613.6,330.1 620.0,330.1 626.4,330.2 632.8,333.5 639.2,333.5 645.6,313.0 652.0,322.2 658.4,322.2 664.8,336.8 671.2,345.2 677.6,351.9 684.0,338.5 690.4,322.7 696.8,308.5 703.2,308.1 709.6,308.1 716.0,308.1 722.5,309.8 728.9,281.8 735.3,281.8 741.7,271.2 748.1,271.2 754.5,271.2 760.9,271.2 767.3,271.2 773.7,269.2 780.1,256.2 786.5,262.6 792.9,275.1 799.3,275.4 805.7,284.8 812.1,285.1 818.5,293.4 824.9,294.3 831.3,298.1 837.7,274.2 844.1,274.2 850.5,274.3 857.0,260.2 863.4,259.6 869.8,259.6 876.2,259.6 882.6,271.3 889.0,258.5 895.4,244.6 901.8,244.6 908.2,244.6 914.6,250.6 921.0,257.1 927.4,242.6 933.8,247.6 940.2,258.5 946.6,269.7 953.0,269.7 959.4,269.7 965.8,269.7 972.2,280.2 978.6,280.2 985.1,298.0 991.5,280.2 997.9,276.5 1004.3,276.5 1010.7,279.7 1017.1,279.7 1023.5,279.7 1029.9,294.4 1036.3,294.4 1042.7,294.4 1049.1,336.1 1055.5,336.5 1061.9,329.6 1068.3,302.6 1074.7,290.4 1081.1,293.4 1087.5,275.4 1093.9,275.4 1100.3,275.4 1106.8,275.4 1113.2,285.1 1119.6,294.3 1126.0,318.5 1132.4,342.7 1138.8,342.7 1145.2,342.7 1151.6,325.2 1158.0,308.5 1164.4,308.5 1170.8,308.5 1177.2,308.5 1183.6,312.3 1190.0,303.0 1196.4,304.6 1202.8,304.6 1209.2,292.9 1215.6,292.6 1222.0,290.4 1228.4,290.1 1234.9,272.6 1241.3,269.6 1247.7,253.5 1254.1,253.2 1260.5,243.5 1266.9,231.5 1273.3,231.5 1279.7,232.7 1286.1,241.4 1292.5,241.4" fill="none" stroke="#0a840a" stroke-width="1" stroke-linejoin="round"/>
<polyline points="17.9,487.7 24.3,491.8 30.7,481.8 37.1,464.0 43.5,464.0 49.9,469.8 56.3,443.1 62.7,445.9 69.1,441.4 75.5,441.4 82.0,447.6 88.4,454.8 94.8,454.8 101.2,454.8 107.6,455.1 114.0,458.1 120.4,458.1 126.8,462.3 133.2,462.3 139.6,465.1 146.0,465.1 152.4,465.1 158.8,472.1 165.2,472.6 171.6,472.1 178.0,471.8 184.4,471.8 190.8,466.0 197.2,435.1 203.6,405.9 210.1,405.9 216.5,411.4 222.9,358.8 229.3,358.8 235.7,358.8 242.1,358.8 248.5,352.6 254.9,361.8 261.3,387.2 267.7,387.2 274.1,387.2 280.5,390.5 286.9,368.5 293.3,364.8 299.7,364.8 306.1,364.8 312.5,364.8 318.9,374.0 325.3,374.0 331.7,390.2 338.1,390.2 344.6,397.2 351.0,397.2 357.4,403.5 363.8,372.7 370.2,384.3 376.6,382.2 383.0,374.7 389.4,374.7 395.8,380.2 402.2,380.2 408.6,380.2 415.0,385.2 421.4,385.7 427.8,387.7 434.2,392.4 440.6,396.0 447.0,398.9 453.4,398.9 459.8,398.9 466.2,398.9 472.7,404.4 479.1,414.7 485.5,417.0 491.9,417.0 498.3,422.2 504.7,422.2 511.1,422.2 517.5,422.2 523.9,424.5 530.3,424.5 536.7,424.5 543.1,427.0 549.5,442.6 555.9,449.6 562.3,449.6 568.7,449.6 575.1,449.6 581.5,457.3 587.9,457.3 594.4,457.3 600.8,459.3 607.2,461.4 613.6,461.5 620.0,461.5 626.4,460.4 632.8,461.0 639.2,461.0 645.6,461.4 652.0,461.3 658.4,463.4 664.8,464.7 671.2,466.3 677.6,464.6 684.0,467.2 690.4,467.9 696.8,465.1 703.2,466.3 709.6,466.3 716.0,466.3 722.5,465.5 728.9,466.8 735.3,466.8 741.7,468.3 748.1,468.3 754.5,468.3 760.9,468.3 767.3,468.3 773.7,467.2 780.1,467.3 786.5,467.9 792.9,468.5 799.3,468.2 805.7,465.8 812.1,465.5 818.5,466.0 824.9,462.1 831.3,462.1 837.7,468.4 844.1,467.4 850.5,462.1 857.0,461.6 863.4,462.2 869.8,463.0 876.2,463.0 882.6,460.2 889.0,460.9 895.4,461.0 901.8,461.0 908.2,461.0 914.6,461.2 921.0,462.3 927.4,461.0 933.8,461.5 940.2,461.0 946.6,455.5 953.0,455.5 959.4,455.5 965.8,455.5 972.2,456.0 978.6,459.3 985.1,467.7 991.5,475.5 997.9,475.5 1004.3,472.7 1010.7,472.2 1017.1,439.3 1023.5,455.2 1029.9,433.5 1036.3,369.2 1042.7,386.7 1049.1,400.4 1055.5,388.0 1061.9,388.0 1068.3,388.0 1074.7,388.0 1081.1,398.4 1087.5,408.4 1093.9,408.4 1100.3,408.4 1106.8,400.9 1113.2,405.9 1119.6,418.4 1126.0,448.5 1132.4,451.8 1138.8,429.3 1145.2,430.5 1151.6,430.5 1158.0,430.0 1164.4,418.0 1170.8,397.2 1177.2,380.1 1183.6,376.3 1190.0,376.4 1196.4,376.9 1202.8,369.0 1209.2,368.7 1215.6,369.0 1222.0,371.2 1228.4,379.3 1234.9,378.8 1241.3,379.8 1247.7,379.0 1254.1,379.3 1260.5,388.0 1266.9,388.0 1273.3,392.0 1279.7,402.8 1286.1,407.2 1292.5,411.2" fill="none" stroke="#8b1515" stroke-width="1.05" stroke-linejoin="round"/>
<polyline points="17.9,447.6 24.3,440.1 30.7,456.8 37.1,473.0 43.5,489.3 49.9,470.1 56.3,506.9 62.7,504.3 69.1,524.5 75.5,496.8 82.0,506.9 88.4,510.2 94.8,495.2 101.2,476.8 107.6,472.1 114.0,471.3 120.4,451.3 126.8,460.9 133.2,471.0 139.6,450.1 146.0,430.6 152.4,430.9 158.8,431.2 165.2,411.7 171.6,447.1 178.0,436.7 184.4,432.2 190.8,448.4 197.2,481.0 203.6,518.3 210.1,483.3 216.5,495.4 222.9,551.8 229.3,581.6 235.7,523.2 242.1,533.8 248.5,536.4 254.9,538.9 261.3,527.6 267.7,515.1 274.1,499.2 280.5,510.4 286.9,533.4 293.3,556.0 299.7,537.9 306.1,527.6 312.5,505.4 318.9,520.1 325.3,505.0 331.7,486.3 338.1,478.4 344.6,468.8 351.0,464.1 357.4,466.3 363.8,500.0 370.2,494.5 376.6,497.5 383.0,513.5 389.4,511.0 395.8,503.5 402.2,488.8 408.6,490.2 415.0,476.5 421.4,475.6 427.8,486.5 434.2,480.6 440.6,472.1 447.0,473.1 453.4,455.1 459.8,437.6 466.2,435.9 472.7,431.2 479.1,435.1 485.5,429.7 491.9,426.4 498.3,438.1 504.7,425.9 511.1,411.7 517.5,415.9 523.9,426.7 530.3,438.4 536.7,433.9 543.1,428.7 549.5,433.4 555.9,400.2 562.3,374.0 568.7,384.8 575.1,374.8 581.5,370.7 587.9,368.5 594.4,366.3 600.8,365.5 607.2,347.6 613.6,325.9 620.0,306.4 626.4,322.9 632.8,320.2 639.2,332.2 645.6,303.5 652.0,307.1 658.4,321.5 664.8,326.8 671.2,324.3 677.6,324.3 684.0,314.3 690.4,296.8 696.8,283.4 703.2,293.4 709.6,321.8 716.0,323.2 722.5,314.3 728.9,280.9 735.3,287.3 741.7,265.9 748.1,254.2 754.5,243.9 760.9,271.7 767.3,277.6 773.7,282.1 780.1,264.6 786.5,283.4 792.9,293.4 799.3,330.0 805.7,319.0 812.1,350.0 818.5,331.4 824.9,372.7 831.3,350.1 837.7,328.7 844.1,330.1 850.5,325.9 857.0,295.0 863.4,305.5 869.8,341.5 876.2,330.1 882.6,346.5 889.0,321.8 895.4,299.1 901.8,293.4 908.2,312.1 914.6,302.7 921.0,310.9 927.4,285.6 933.8,280.0 940.2,290.9 946.6,296.7 953.0,367.2 959.4,418.4 965.8,436.8 972.2,419.3 978.6,456.0 985.1,431.8 991.5,415.9 997.9,399.6 1004.3,425.9 1010.7,410.9 1017.1,452.7 1023.5,439.8 1029.9,487.0 1036.3,539.1 1042.7,531.3 1049.1,523.8 1055.5,598.0 1061.9,548.0 1068.3,520.4 1074.7,497.9 1081.1,502.0 1087.5,492.0 1093.9,461.8 1100.3,441.3 1106.8,463.2 1113.2,441.0 1119.6,460.2 1126.0,466.8 1132.4,483.0 1138.8,502.0 1145.2,522.9 1151.6,483.0 1158.0,454.3 1164.4,483.7 1170.8,502.0 1177.2,540.8 1183.6,530.4 1190.0,517.1 1196.4,511.2 1202.8,537.0 1209.2,496.2 1215.6,506.2 1222.0,492.5 1228.4,502.3 1234.9,473.7 1241.3,471.0 1247.7,448.7 1254.1,453.7 1260.5,432.7 1266.9,417.0 1273.3,415.3 1279.7,415.3 1286.1,409.3 1292.5,378.5" fill="none" stroke="#0a14f5" stroke-width="1.12" stroke-linejoin="round"/>
<line x1="17.5" y1="495.7" x2="1292" y2="140.6" stroke="#000" stroke-width="1.12"/>
<rect x="16" y="135" width="96" height="85.500" fill="#f6f6f6" fill-opacity="0.900"/>
<path d="M112 135V220.500H16" fill="none" stroke="#e6e6e6" stroke-width="1"/>
<line x1="15" x2="1353" y1="598.5" y2="598.5" stroke="#000" stroke-width="1"/>
</svg>
<div class="t" style="left:1301.10px;top:178px;font-size:10px;line-height:13px;color:#000;letter-spacing:0.054px;">75&#x27;000.00</div>
<div class="t" style="left:1301.10px;top:227px;font-size:10px;line-height:13px;color:#000;letter-spacing:0.054px;">62&#x27;500.00</div>
<div class="t" style="left:1301.10px;top:276px;font-size:10px;line-height:13px;color:#000;letter-spacing:0.054px;">50&#x27;000.00</div>
<div class="t" style="left:1301.10px;top:326px;font-size:10px;line-height:13px;color:#000;letter-spacing:0.054px;">37&#x27;500.00</div>
<div class="t" style="left:1301.10px;top:424px;font-size:10px;line-height:13px;color:#000;letter-spacing:0.054px;">12&#x27;500.00</div>
<div class="t" style="left:1297.10px;top:523px;font-size:10px;line-height:13px;color:#000;letter-spacing:0.092px;">-12&#x27;500.00</div>
<div class="t" style="left:1297.10px;top:572px;font-size:10px;line-height:13px;color:#000;letter-spacing:0.092px;">-25&#x27;000.00</div>
<div class="b" style="left:1301px;top:133px;width:50.5px;height:12px;background:#000;"></div>
<div class="t" style="left:1301.10px;top:133px;font-size:10px;line-height:13px;color:#fff;letter-spacing:0.054px;-webkit-text-stroke:0.45px #fff;">86&#x27;326.28</div>
<div class="b" style="left:1301px;top:165px;width:50.5px;height:12px;background:#00ff00;"></div>
<div class="t" style="left:1301.10px;top:165px;font-size:10px;line-height:13px;color:#fff;letter-spacing:0.054px;-webkit-text-stroke:0.45px #fff;">78&#x27;313.63</div>
<div class="b" style="left:1301px;top:235px;width:50.5px;height:12px;background:#0c8c0c;"></div>
<div class="t" style="left:1301.10px;top:235px;font-size:10px;line-height:13px;color:#fff;letter-spacing:0.054px;-webkit-text-stroke:0.45px #fff;">60&#x27;643.61</div>
<div class="b" style="left:1301px;top:371px;width:50.5px;height:12px;background:#0000f0;"></div>
<div class="t" style="left:1301.10px;top:371px;font-size:10px;line-height:13px;color:#fff;letter-spacing:0.054px;-webkit-text-stroke:0.45px #fff;">25&#x27;965.00</div>
<div class="b" style="left:1301px;top:404px;width:50.5px;height:12px;background:#8b1212;"></div>
<div class="t" style="left:1301.10px;top:404px;font-size:10px;line-height:13px;color:#fff;letter-spacing:0.054px;-webkit-text-stroke:0.45px #fff;">17&#x27;670.02</div>
<div class="b" style="left:1327.5px;top:474px;width:24px;height:12px;background:#ff0000;"></div>
<div class="t" style="left:1327.60px;top:474px;font-size:10px;line-height:13px;color:#fff;letter-spacing:0.711px;-webkit-text-stroke:0.45px #fff;">0.00</div>
<div class="t" style="left:30.00px;top:600px;font-size:10px;line-height:13px;color:#000;letter-spacing:0.245px;">13:00</div>
<div class="t" style="left:30.00px;top:612px;font-size:10px;line-height:13px;color:#000;letter-spacing:0.149px;">21.01.2010</div>
<div class="t" style="left:132.42px;top:612px;font-size:10px;line-height:13px;color:#000;letter-spacing:0.149px;">25.03.2010</div>
<div class="t" style="left:234.84px;top:612px;font-size:10px;line-height:13px;color:#000;letter-spacing:0.149px;">28.05.2010</div>
<div class="t" style="left:337.26px;top:612px;font-size:10px;line-height:13px;color:#000;letter-spacing:0.149px;">28.07.2010</div>
<div class="t" style="left:439.68px;top:612px;font-size:10px;line-height:13px;color:#000;letter-spacing:0.149px;">27.09.2010</div>
<div class="t" style="left:542.10px;top:612px;font-size:10px;line-height:13px;color:#000;letter-spacing:0.149px;">25.11.2010</div>
<div class="t" style="left:644.52px;top:612px;font-size:10px;line-height:13px;color:#000;letter-spacing:0.149px;">02.02.2011</div>
<div class="t" style="left:746.94px;top:612px;font-size:10px;line-height:13px;color:#000;letter-spacing:0.149px;">05.04.2011</div>
<div class="t" style="left:849.36px;top:612px;font-size:10px;line-height:13px;color:#000;letter-spacing:0.149px;">07.06.2011</div>
<div class="t" style="left:951.78px;top:612px;font-size:10px;line-height:13px;color:#000;letter-spacing:0.149px;">05.08.2011</div>
<div class="t" style="left:1054.20px;top:612px;font-size:10px;line-height:13px;color:#000;letter-spacing:0.149px;">04.10.2011</div>
<div class="t" style="left:1156.62px;top:612px;font-size:10px;line-height:13px;color:#000;letter-spacing:0.149px;">02.12.2011</div>
<div class="t" style="left:1259.04px;top:612px;font-size:10px;line-height:13px;color:#000;letter-spacing:0.149px;">02.02.2012</div>
<div class="t" style="left:21.00px;top:135px;font-size:10px;line-height:13px;color:#000;font-weight:bold;letter-spacing:0.113px;">Прибыль:</div>
<div class="t" style="left:21.00px;top:147px;font-size:10px;line-height:13px;color:#00ff00;letter-spacing:-0.036px;-webkit-text-stroke:0.250px #00ff00;">Прибыль</div>
<div class="t" style="left:21.00px;top:160px;font-size:10px;line-height:13px;color:#ff0000;letter-spacing:0.052px;-webkit-text-stroke:0.250px #ff0000;">Убыток</div>
<div class="t" style="left:21.00px;top:172px;font-size:10px;line-height:13px;color:#0c960c;letter-spacing:-0.070px;-webkit-text-stroke:0.250px #0c960c;">Длинные позиции</div>
<div class="t" style="left:21.00px;top:184px;font-size:10px;line-height:13px;color:#961414;letter-spacing:-0.137px;-webkit-text-stroke:0.250px #961414;">Короткие позиции</div>
<div class="t" style="left:21.00px;top:196px;font-size:10px;line-height:13px;color:#0000ff;letter-spacing:-0.135px;-webkit-text-stroke:0.250px #0000ff;">Купил и держи</div>
<div class="t" style="left:21.00px;top:208px;font-size:10px;line-height:13px;color:#000;letter-spacing:-0.231px;-webkit-text-stroke:0.250px #000;">Медиана</div>
</div>
</body></html>
